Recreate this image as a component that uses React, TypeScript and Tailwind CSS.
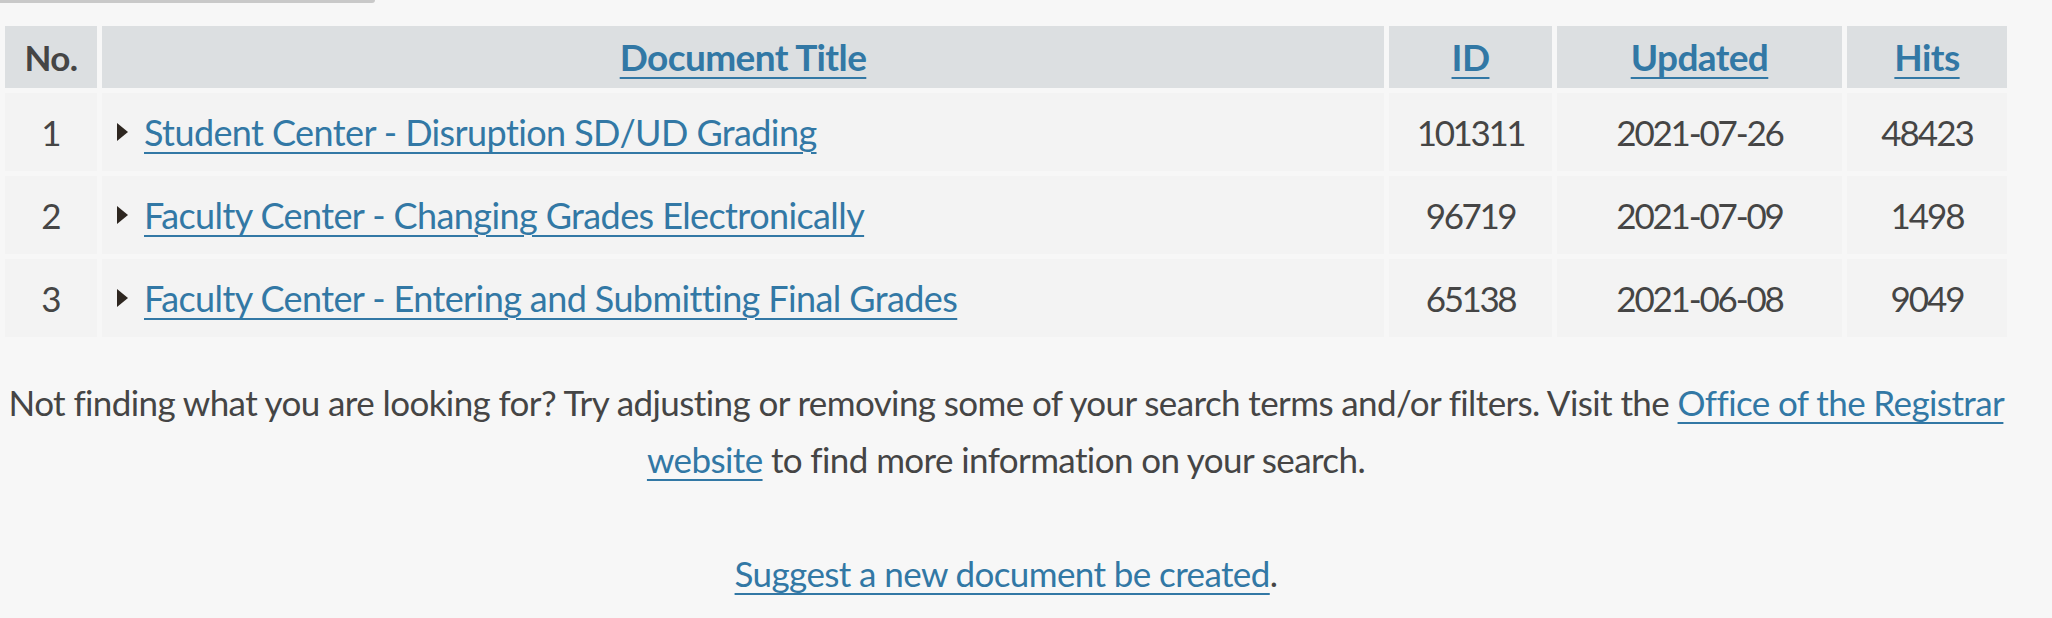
const rows = [
  { n: 1, title: "Student Center - Disruption SD/UD Grading", id: "101311", updated: "2021-07-26", hits: "48423" },
  { n: 2, title: "Faculty Center - Changing Grades Electronically", id: "96719", updated: "2021-07-09", hits: "1498" },
  { n: 3, title: "Faculty Center - Entering and Submitting Final Grades", id: "65138", updated: "2021-06-08", hits: "9049" },
];

const link =
  "text-[#3278a5] underline decoration-2 underline-offset-[6px]";

function Caret() {
  return (
    <svg width="11" height="18" viewBox="0 0 11 18" className="mr-[16px] shrink-0">
      <polygon points="0,0 11,9 0,18" fill="#2d2620" />
    </svg>
  );
}

export default function App() {
  return (
    <div
      className="min-h-screen bg-[#f7f7f7] text-[#454545]"
      style={{ fontFamily: "Lato, 'Open Sans', sans-serif" }}
    >
      <div className="w-[2012px]">
        <div className="h-[3px] w-[375px] rounded-br-[3px] bg-[#c9c9c9]" />

        <table className="mt-[18px] w-full border-separate border-spacing-[5px] text-[35px] tracking-[-0.6px]">
          <thead>
            <tr className="h-[62px] bg-[#dcdfe1] text-[37px] font-bold">
              <th className="w-[92px] text-center text-[35px] text-[#454545]">No.</th>
              <th className="text-center">
                <a className={link} href="#">Document Title</a>
              </th>
              <th className="w-[163px] text-center">
                <a className={link} href="#">ID</a>
              </th>
              <th className="w-[285px] text-center">
                <a className={link} href="#">Updated</a>
              </th>
              <th className="w-[160px] text-center">
                <a className={link} href="#">Hits</a>
              </th>
            </tr>
          </thead>
          <tbody>
            {rows.map((r) => (
              <tr key={r.n} className="h-[78px] bg-[#f3f3f3]">
                <td className="text-center">{r.n}</td>
                <td className="pl-[15px] text-[36px]">
                  <div className="flex items-center">
                    <Caret />
                    <a className={link} href="#">{r.title}</a>
                  </div>
                </td>
                <td className="text-center tracking-[-2.4px]">{r.id}</td>
                <td className="text-center tracking-[-2.2px]">{r.updated}</td>
                <td className="text-center tracking-[-2px]">{r.hits}</td>
              </tr>
            ))}
          </tbody>
        </table>

        <p className="mt-[32px] text-center text-[35px] leading-[57px] tracking-[-0.6px]">
          Not finding what you are looking for? Try adjusting or removing some of your search terms and/or filters. Visit the{" "}
          <a className={link} href="#">Office of the Registrar</a>{" "}
          <a className={link} href="#">website</a> to find more information on your search.
          <br />
          <br />
          <a className={link} href="#">Suggest a new document be created</a>.
        </p>
      </div>
    </div>
  );
}
